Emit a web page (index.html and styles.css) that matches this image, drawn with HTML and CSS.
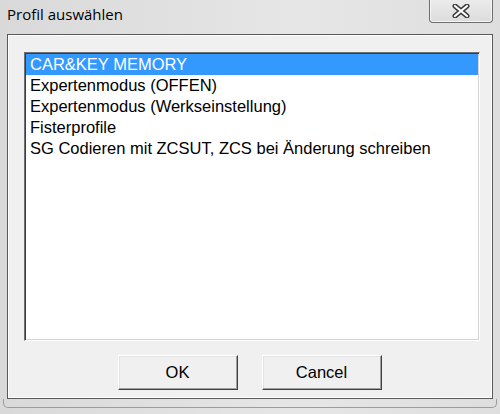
FILE: index.html
```html
<!DOCTYPE html>
<html lang="de">
<head>
    <meta charset="UTF-8">
    <title>Profil auswählen</title>
    <link rel="stylesheet" href="styles.css">
</head>
<body>
    <div class="window">
        <div class="titlebar">
            <span class="title">Profil auswählen</span>
            <div class="close-button">
                <svg width="20" height="14" viewBox="0 0 20 14">
                    <path d="M4 2 L16 12 M16 2 L4 12" stroke="#3a3a3a" stroke-width="5" stroke-linecap="round"/>
                    <path d="M4 2 L16 12 M16 2 L4 12" stroke="#ffffff" stroke-width="2.2" stroke-linecap="round"/>
                </svg>
            </div>
        </div>

        <div class="client">
            <ul class="listbox">
                <li class="selected">CAR&amp;KEY MEMORY</li>
                <li>Expertenmodus (OFFEN)</li>
                <li>Expertenmodus (Werkseinstellung)</li>
                <li>Fisterprofile</li>
                <li>SG Codieren mit ZCSUT, ZCS bei Änderung schreiben</li>
            </ul>

            <div class="buttons">
                <button type="button">OK</button>
                <button type="button">Cancel</button>
            </div>
        </div>

        <!-- outer frame edge below the client area -->
        <div class="frame-bottom"></div>
    </div>
</body>
</html>
```

FILE: styles.css
```css
body {
    margin: 0;
    background-color: #e8e8e8;
    font-family: "Liberation Sans", Arial, sans-serif;
}

.window {
    width: 500px;
    height: 414px;
    background: linear-gradient(to right, #d9d9d9, #e6e6e6 60%, #dedede);
}

.titlebar {
    height: 34px;
    display: flex;
    justify-content: space-between;
    align-items: flex-start;
    padding-left: 7px;
}

.title {
    font-family: "Open Sans", "Noto Sans", sans-serif;
    font-size: 15px;
    color: #000;
    margin-top: 4px;
}

.close-button {
    width: 64px;
    height: 24px;
    margin-top: -1px;
    margin-right: 7px;
    box-sizing: border-box;
    border: 1px solid #6e6e6e;
    border-top: none;
    border-radius: 0 0 4px 4px;
    background: linear-gradient(#ececec, #dcdcdc);
    box-shadow: inset 0 0 0 1px #f6f6f6;
    display: flex;
    justify-content: center;
    align-items: center;
}

.client {
    margin: 0 7px;
    height: 365px;
    box-sizing: border-box;
    border: 1px solid #5a5a5a;
    box-shadow: inset 0 0 0 1px #ffffff;
    background-color: #f0f0f0;
    padding: 17px 12px 0 16px;
}

.listbox {
    list-style: none;
    margin: 0;
    padding: 1px;
    height: 289px;
    box-sizing: border-box;
    background-color: #fff;
    border-top: 1px solid #707070;
    border-left: 1px solid #707070;
    border-right: 1px solid #ffffff;
    border-bottom: 1px solid #ffffff;
    box-shadow: inset 1px 1px 0 #3c3c3c, inset -1px -1px 0 #d4d4d4;
}

.listbox li {
    height: 21px;
    line-height: 21px;
    padding-left: 4px;
    font-size: 16.5px;
    color: #000;
    white-space: nowrap;
}

.listbox li.selected {
    background-color: #3399ff;
    color: #fff;
}

.buttons {
    display: flex;
    justify-content: center;
    gap: 24px;
    margin-top: 14px;
    margin-left: -5px;
}

button {
    width: 120px;
    height: 35px;
    font-family: "Liberation Sans", Arial, sans-serif;
    font-size: 16.5px;
    color: #000;
    background-color: #f0f0f0;
    border-top: 1px solid #ffffff;
    border-left: 1px solid #ffffff;
    border-right: 1px solid #404040;
    border-bottom: 1px solid #404040;
    box-shadow: inset -1px -1px 0 #a0a0a0, inset 1px 1px 0 #e3e3e3;
    padding: 0;
}

.frame-bottom {
    margin: 0 3px;
    height: 8px;
    border: 1px solid #9c9c9c;
    border-top: none;
    border-radius: 0 0 5px 5px;
}
```
